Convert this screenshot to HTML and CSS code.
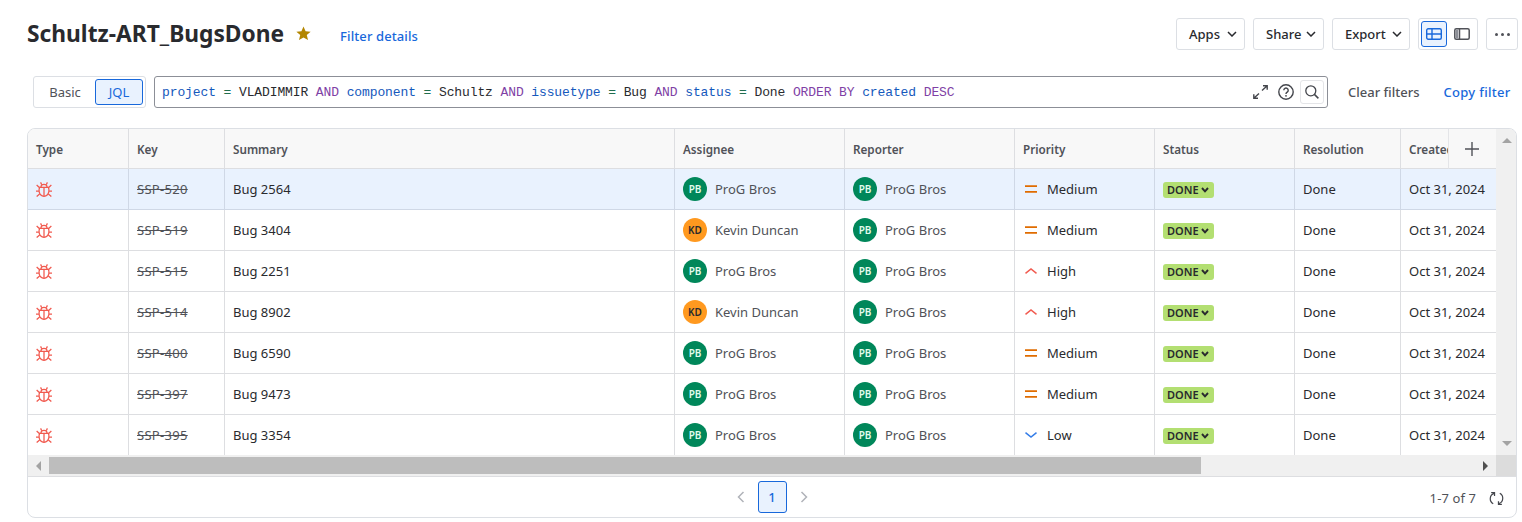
FILE: index.html
```html
<!DOCTYPE html>
<html lang="en">
<head>
    <meta charset="utf-8">
    <title>Schultz-ART_BugsDone</title>
    <link rel="stylesheet" href="styles.css">
</head>
<body>
    <svg class="sprites" width="0" height="0">
        <symbol id="bug" viewBox="0 0 15 14">
            <g fill="none" stroke="currentColor" stroke-width="1.2">
                <path d="M3.4 5H11.6C12.2 6.2 12.3 7.6 12 9.2 11.5 11.6 9.8 13.2 7.5 13.4 5.200 13.200 3.500 11.600 3 9.200 2.700 7.600 2.800 6.200 3.400 5Z"/>
                <path d="M4.600 5A2.900 2.900 0 0 1 10.400 5"/>
                <path d="M7.500 5V13.400"/>
                <path d="M4.300 .3 5.400 2.500M10.700 .3 9.600 2.500"/>
                <path d="M.6 2.800 3.400 5.400M14.400 2.800 11.600 5.400M0 8.500H2.800M15 8.500H12.200M.6 13.600 3.400 11.200M14.400 13.600 11.600 11.200"/>
            </g>
        </symbol>
        <symbol id="medium" viewBox="0 0 12 8">
            <path d="M0 1.200H12M0 6.800H12" fill="none" stroke="#e06c00" stroke-width="1.700"/>
        </symbol>
        <symbol id="high" viewBox="0 0 12 8">
            <path d="M.5 6.400 6 2 11.500 6.400" fill="none" stroke="#f15b50" stroke-width="1.500"/>
        </symbol>
        <symbol id="low" viewBox="0 0 12 8">
            <path d="M.5 1.600 6 6 11.500 1.600" fill="none" stroke="#357de8" stroke-width="1.500"/>
        </symbol>
        <symbol id="chev" viewBox="0 0 10 6">
            <path d="M1 1 5 5 9 1" fill="none" stroke="currentColor" stroke-width="1.500"/>
        </symbol>
        <symbol id="loz" viewBox="0 0 8 6">
            <path d="M1 1 4 4.400 7 1" fill="none" stroke="currentColor" stroke-width="1.900"/>
        </symbol>
    </svg>

    <header class="title-bar">
        <h1>Schultz-ART_BugsDone</h1>
        <svg class="star" width="15" height="15" viewBox="0 0 16 16"><path d="M8 .6 10.200 5.600 15.600 6.100 11.500 9.700 12.800 15 8 12.200 3.200 15 4.500 9.700.4 6.100 5.800 5.600Z" fill="#b38600"/></svg>
        <a class="link details-link">Filter details</a>
        <div class="actions">
            <button class="btn btn-apps">Apps <svg class="btn-chev"><use href="#chev"/></svg></button>
            <button class="btn btn-share">Share <svg class="btn-chev"><use href="#chev"/></svg></button>
            <button class="btn btn-export">Export <svg class="btn-chev"><use href="#chev"/></svg></button>
            <div class="view-toggle">
                <span class="view-btn active">
                    <svg width="16" height="12" viewBox="0 0 16 12"><g fill="none" stroke="currentColor" stroke-width="1.400"><rect x=".7" y=".7" width="14.600" height="10.600" rx="1.500"/><path d="M.7 6H15.300M6 .7V11.300"/></g></svg>
                </span>
                <span class="view-btn">
                    <svg width="16" height="12" viewBox="0 0 16 12"><g fill="none" stroke="#505258" stroke-width="1.500"><rect x=".8" y=".8" width="14.400" height="10.400" rx="1.500"/><path d="M5.500 .8V11.200"/><path d="M3 1.500V10.500" stroke="#8c8f97" stroke-width="2.500"/></g></svg>
                </span>
            </div>
            <button class="btn btn-more"><span></span><span></span><span></span></button>
        </div>
    </header>

    <section class="filter-bar">
        <div class="mode-switch">
            <span class="mode">Basic</span>
            <span class="mode selected">JQL</span>
        </div>
        <div class="jql-box">
            <code class="jql"><span class="fld">project</span> <span class="op">=</span> VLADIMMIR <span class="kw">AND</span> <span class="fld">component</span> <span class="op">=</span> Schultz <span class="kw">AND</span> <span class="fld">issuetype</span> <span class="op">=</span> Bug <span class="kw">AND</span> <span class="fld">status</span> <span class="op">=</span> Done <span class="kw">ORDER BY</span> <span class="fld">created</span> <span class="kw">DESC</span></code>
            <svg class="jql-icon" width="15" height="14" viewBox="0 0 15 14"><path d="M9 5.500 14.200 .8M10 .8H14.200V4.800M6 8.500 .8 13.200M.8 9.200V13.200H5" fill="none" stroke="#44464c" stroke-width="1.400"/></svg>
            <svg class="jql-icon help" width="16" height="16" viewBox="0 0 16 16"><circle cx="8" cy="8" r="7.200" fill="none" stroke="#44464c" stroke-width="1.400"/><path d="M5.800 6.200a2.200 2.200 0 1 1 3.400 1.900c-.8.5-1.200.9-1.200 1.800" fill="none" stroke="#44464c" stroke-width="1.400"/><circle cx="8" cy="11.800" r=".9" fill="#44464c"/></svg>
            <span class="jql-search">
                <svg width="14" height="14" viewBox="0 0 14 14"><circle cx="5.800" cy="5.800" r="5" fill="none" stroke="#44464c" stroke-width="1.300"/><path d="M9.400 9.400 13.400 13.400" stroke="#44464c" stroke-width="1.500"/></svg>
            </span>
        </div>
        <a class="clear-link">Clear filters</a>
        <a class="link copy-link">Copy filter</a>
    </section>

    <section class="results">
        <div class="grid-area">
            <div class="grid-scroll">
                <table class="issues">
                    <colgroup>
                        <col class="c-type"><col class="c-key"><col class="c-sum"><col class="c-person"><col class="c-person"><col class="c-pri"><col class="c-status"><col class="c-res"><col class="c-created">
                    </colgroup>
                    <thead>
                        <tr><th>Type</th><th>Key</th><th>Summary</th><th>Assignee</th><th>Reporter</th><th>Priority</th><th>Status</th><th>Resolution</th><th>Created</th></tr>
                    </thead>
                    <tbody>
                        <tr class="current">
                            <td><svg class="bug"><use href="#bug"/></svg></td><td><s class="key">SSP-520</s></td><td>Bug 2564</td>
                            <td><div class="person"><span class="avatar pb">PB</span>ProG Bros</div></td><td><div class="person"><span class="avatar pb">PB</span>ProG Bros</div></td>
                            <td><div class="priority"><svg class="pri"><use href="#medium"/></svg>Medium</div></td>
                            <td><span class="lozenge">DONE<svg class="loz-chev"><use href="#loz"/></svg></span></td><td>Done</td><td>Oct 31, 2024</td>
                        </tr>
                        <tr>
                            <td><svg class="bug"><use href="#bug"/></svg></td><td><s class="key">SSP-519</s></td><td>Bug 3404</td>
                            <td><div class="person"><span class="avatar kd">KD</span>Kevin Duncan</div></td><td><div class="person"><span class="avatar pb">PB</span>ProG Bros</div></td>
                            <td><div class="priority"><svg class="pri"><use href="#medium"/></svg>Medium</div></td>
                            <td><span class="lozenge">DONE<svg class="loz-chev"><use href="#loz"/></svg></span></td><td>Done</td><td>Oct 31, 2024</td>
                        </tr>
                        <tr>
                            <td><svg class="bug"><use href="#bug"/></svg></td><td><s class="key">SSP-515</s></td><td>Bug 2251</td>
                            <td><div class="person"><span class="avatar pb">PB</span>ProG Bros</div></td><td><div class="person"><span class="avatar pb">PB</span>ProG Bros</div></td>
                            <td><div class="priority"><svg class="pri"><use href="#high"/></svg>High</div></td>
                            <td><span class="lozenge">DONE<svg class="loz-chev"><use href="#loz"/></svg></span></td><td>Done</td><td>Oct 31, 2024</td>
                        </tr>
                        <tr>
                            <td><svg class="bug"><use href="#bug"/></svg></td><td><s class="key">SSP-514</s></td><td>Bug 8902</td>
                            <td><div class="person"><span class="avatar kd">KD</span>Kevin Duncan</div></td><td><div class="person"><span class="avatar pb">PB</span>ProG Bros</div></td>
                            <td><div class="priority"><svg class="pri"><use href="#high"/></svg>High</div></td>
                            <td><span class="lozenge">DONE<svg class="loz-chev"><use href="#loz"/></svg></span></td><td>Done</td><td>Oct 31, 2024</td>
                        </tr>
                        <tr>
                            <td><svg class="bug"><use href="#bug"/></svg></td><td><s class="key">SSP-400</s></td><td>Bug 6590</td>
                            <td><div class="person"><span class="avatar pb">PB</span>ProG Bros</div></td><td><div class="person"><span class="avatar pb">PB</span>ProG Bros</div></td>
                            <td><div class="priority"><svg class="pri"><use href="#medium"/></svg>Medium</div></td>
                            <td><span class="lozenge">DONE<svg class="loz-chev"><use href="#loz"/></svg></span></td><td>Done</td><td>Oct 31, 2024</td>
                        </tr>
                        <tr>
                            <td><svg class="bug"><use href="#bug"/></svg></td><td><s class="key">SSP-397</s></td><td>Bug 9473</td>
                            <td><div class="person"><span class="avatar pb">PB</span>ProG Bros</div></td><td><div class="person"><span class="avatar pb">PB</span>ProG Bros</div></td>
                            <td><div class="priority"><svg class="pri"><use href="#medium"/></svg>Medium</div></td>
                            <td><span class="lozenge">DONE<svg class="loz-chev"><use href="#loz"/></svg></span></td><td>Done</td><td>Oct 31, 2024</td>
                        </tr>
                        <tr>
                            <td><svg class="bug"><use href="#bug"/></svg></td><td><s class="key">SSP-395</s></td><td>Bug 3354</td>
                            <td><div class="person"><span class="avatar pb">PB</span>ProG Bros</div></td><td><div class="person"><span class="avatar pb">PB</span>ProG Bros</div></td>
                            <td><div class="priority"><svg class="pri"><use href="#low"/></svg>Low</div></td>
                            <td><span class="lozenge">DONE<svg class="loz-chev"><use href="#loz"/></svg></span></td><td>Done</td><td>Oct 31, 2024</td>
                        </tr>
                    </tbody>
                </table>
                <div class="add-col">
                    <svg width="14" height="14" viewBox="0 0 14 14"><path d="M7 0V14M0 7H14" stroke="#505258" stroke-width="1.400"/></svg>
                </div>
            </div>
            <div class="vbar"><span class="arrow up"></span><span class="arrow down"></span></div>
        </div>
        <div class="hbar-row">
            <div class="hbar">
                <span class="arrow left"></span>
                <div class="hbar-track"><div class="hbar-thumb"></div></div>
                <span class="arrow right"></span>
            </div>
            <div class="corner"></div>
        </div>
        <footer class="pager-row">
            <div class="pager">
                <svg class="page-arrow" width="8" height="12" viewBox="0 0 8 12"><path d="M6.500 1 1.500 6 6.500 11" fill="none" stroke="#b0b3b9" stroke-width="1.500"/></svg>
                <span class="page-num">1</span>
                <svg class="page-arrow" width="8" height="12" viewBox="0 0 8 12"><path d="M1.500 1 6.500 6 1.500 11" fill="none" stroke="#b0b3b9" stroke-width="1.500"/></svg>
            </div>
            <div class="count">
                <span>1-7 of 7</span>
                <svg width="15" height="15" viewBox="0 0 15 16"><g fill="none" stroke="#44464c" stroke-width="1.300"><path d="M5 2.600A6 6 0 0 0 4 13.600"/><path d="M10 13.400A6 6 0 0 0 11 2.400"/><path d="M1.800 1.800H5.400V5.200"/><path d="M13.200 14.200H9.600V10.800"/></g></svg>
            </div>
        </footer>
    </section>
</body>
</html>
```

FILE: styles.css
```css
/* Page */
body {
    margin: 0;
    padding: 18px 4px 0 27px;
    height: 522px;
    box-sizing: border-box;
    overflow: hidden;
    background: #fff;
    color: #292a2e;
    font-family: "Noto Sans", "Open Sans", sans-serif;
    font-size: 13px;
}

.sprites {
    position: absolute;
}

.link {
    color: #1868db;
    font-weight: 500;
    letter-spacing: .3px;
}

/* Title row */
.title-bar {
    display: flex;
    align-items: center;
    height: 32px;
}

h1 {
    margin: 0;
    font-size: 22.75px;
    font-weight: 700;
    line-height: 32px;
    color: #292a2e;
}

.star {
    margin-left: 12px;
    margin-bottom: 2px;
}

.details-link {
    margin-left: 29px;
    margin-top: 3px;
    letter-spacing: .1px;
}

.actions {
    margin-left: auto;
    display: flex;
    gap: 8px;
}

.btn {
    display: flex;
    align-items: center;
    justify-content: space-between;
    box-sizing: border-box;
    height: 32px;
    padding: 0 7px 0 12px;
    background: #fff;
    border: 1px solid #dcdfe4;
    border-radius: 3px;
    color: #292a2e;
    font: 500 13px "Noto Sans", sans-serif;
}

.btn-apps { width: 69px; }
.btn-share { width: 71px; }
.btn-export { width: 78px; }

.btn-chev {
    width: 10px;
    height: 6px;
}

.btn-more {
    width: 32px;
    padding: 0;
    justify-content: center;
    gap: 3px;
}

.btn-more span {
    width: 3px;
    height: 3px;
    border-radius: 50%;
    background: #505258;
}

.view-toggle {
    display: flex;
    align-items: center;
    gap: 2px;
    height: 32px;
    padding: 0 2px;
    border: 1px solid #dcdfe4;
    border-radius: 3px;
    box-sizing: border-box;
    width: 60px;
}

.view-btn {
    display: flex;
    align-items: center;
    justify-content: center;
    width: 26px;
    height: 26px;
    box-sizing: border-box;
}

.view-btn.active {
    background: #e9f2fe;
    border: 1px solid #1868db;
    border-radius: 3px;
    color: #1868db;
}

/* JQL row */
.filter-bar {
    display: flex;
    align-items: center;
    margin-top: 26px;
    margin-left: 6px;
    height: 32px;
}

.mode-switch {
    display: flex;
    align-items: center;
    justify-content: flex-end;
    box-sizing: border-box;
    width: 113px;
    height: 32px;
    padding-right: 2px;
    border: 1px solid #dcdfe4;
    border-radius: 3px;
}

.mode {
    display: flex;
    align-items: center;
    justify-content: center;
    box-sizing: border-box;
    width: 48px;
    height: 26px;
    color: #505258;
}

.mode:first-child {
    width: 60px;
}

.mode.selected {
    background: #e9f2fe;
    border: 1px solid #1868db;
    border-radius: 3px;
    color: #1868db;
}

.jql-box {
    flex: none;
    display: flex;
    align-items: center;
    box-sizing: border-box;
    width: 1174px;
    height: 32px;
    margin-left: 8px;
    padding: 0 3px 0 7px;
    border: 1px solid #8c8f97;
    border-radius: 3px;
}

.jql {
    flex: 1;
    font-family: "Liberation Mono", monospace;
    font-size: 13px;
    letter-spacing: -.11px;
    color: #292a2e;
}

.jql .fld {
    color: #1558bc;
}

.jql .op {
    color: #216e4e;
}

.jql .kw {
    color: #803fa5;
}

.jql-icon {
    margin-right: 10px;
}

.jql-icon.help {
    margin-right: 6px;
}

.jql-search {
    display: flex;
    align-items: center;
    justify-content: center;
    width: 24px;
    height: 24px;
    box-sizing: border-box;
    border: 1px solid #e4e5e8;
    border-radius: 3px;
}

.clear-link {
    margin-left: 20px;
    color: #505258;
    font-weight: 500;
}

.copy-link {
    margin-left: 24px;
}

/* Results table */
.results {
    margin-top: 20px;
    margin-right: 1px;
    height: 390px;
    box-sizing: border-box;
    border: 1px solid #dcdfe4;
    border-radius: 8px;
    overflow: hidden;
}

.grid-area {
    display: flex;
    height: 326px;
}

.grid-scroll {
    position: relative;
    width: 1468px;
    overflow: hidden;
}

.issues {
    border-collapse: separate;
    border-spacing: 0;
    table-layout: fixed;
    width: 1600px;
}

.c-type { width: 101px; }
.c-key { width: 96px; }
.c-sum { width: 450px; }
.c-person { width: 170px; }
.c-pri { width: 140px; }
.c-status { width: 140px; }
.c-res { width: 106px; }
.c-created { width: 227px; }

th, td {
    box-sizing: border-box;
    padding: 0 8px;
    border-right: 1px solid #dddee1;
    border-bottom: 1px solid #dddee1;
    text-align: left;
    white-space: nowrap;
    overflow: hidden;
}

th {
    height: 40px;
    padding-top: 1px;
    background: #f8f8f8;
    color: #505258;
    font-size: 11.7px;
    font-weight: 600;
}

td {
    height: 41px;
    color: #292a2e;
}

.current td {
    background: #e9f2fe;
    border-color: #cfd8e6;
}

.bug {
    display: block;
    width: 16px;
    height: 15px;
    color: #f15b50;
}

.key {
    color: #505258;
    letter-spacing: .3px;
}

.person {
    display: flex;
    align-items: center;
    gap: 8px;
    color: #505258;
}

.avatar {
    display: flex;
    align-items: center;
    justify-content: center;
    width: 24px;
    height: 24px;
    border-radius: 50%;
    font-size: 10px;
    font-weight: 600;
}

.avatar.pb {
    background: #00875a;
    color: #e3fcef;
}

.avatar.kd {
    background: #ff991f;
    color: #292a2e;
}

.priority {
    display: flex;
    align-items: center;
    gap: 10px;
    padding-left: 2px;
}

.pri {
    width: 12px;
    height: 8px;
}

.lozenge {
    display: inline-flex;
    align-items: center;
    gap: 2px;
    box-sizing: border-box;
    width: 51px;
    height: 16px;
    padding: 0 4px 1px;
    border-radius: 3px;
    background: #b3df72;
    color: #292a2e;
    font-size: 11px;
    font-weight: 600;
    vertical-align: middle;
}

.loz-chev {
    width: 8px;
    height: 6px;
}

.add-col {
    position: absolute;
    top: 0;
    right: 0;
    display: flex;
    align-items: center;
    justify-content: center;
    width: 46px;
    height: 38px;
    padding: 1px 1px 0 0;
    background: #f8f8f8;
    border-left: 1px solid #e4e5e8;
    border-bottom: 1px solid #dddee1;
}

/* Fake scrollbars, drawn so they look like the ones on Windows */
.vbar {
    flex: 1;
    position: relative;
    background: #f0f0f0;
}

.arrow {
    position: absolute;
    width: 0;
    height: 0;
    border: 5px solid transparent;
}

.arrow.up {
    top: 9px;
    left: 6px;
    border-top: 0;
    border-bottom-color: #a3a3a3;
}

.arrow.down {
    bottom: 9px;
    left: 6px;
    border-bottom: 0;
    border-top-color: #a3a3a3;
}

.hbar-row {
    display: flex;
    height: 21px;
    border-bottom: 1px solid #dddee1;
}

.hbar {
    position: relative;
    display: flex;
    width: 1468px;
    background: #f0f0f0;
    box-sizing: border-box;
    padding: 2px 16px 2px 21px;
}

.hbar-track {
    flex: 1;
}

.hbar-thumb {
    width: 1152px;
    height: 100%;
    background: #bdbdbd;
}

.arrow.left {
    left: 8px;
    top: 6px;
    border-left: 0;
    border-right-color: #a3a3a3;
}

.arrow.right {
    right: 8px;
    top: 6px;
    border-right: 0;
    border-left-color: #505050;
}

.corner {
    flex: 1;
    background: #dcdcdc;
}

/* Pagination */
.pager-row {
    position: relative;
    display: flex;
    align-items: center;
    justify-content: center;
    height: 40px;
}

.pager {
    display: flex;
    align-items: center;
    gap: 13px;
}

.page-num {
    display: flex;
    align-items: center;
    justify-content: center;
    box-sizing: border-box;
    width: 29px;
    height: 32px;
    background: #e9f2fe;
    border: 1px solid #1868db;
    border-radius: 3px;
    color: #1868db;
    font-weight: 500;
}

.count {
    position: absolute;
    right: 12px;
    top: 12px;
    display: flex;
    align-items: center;
    gap: 13px;
    color: #505258;
    letter-spacing: .1px;
}
```
